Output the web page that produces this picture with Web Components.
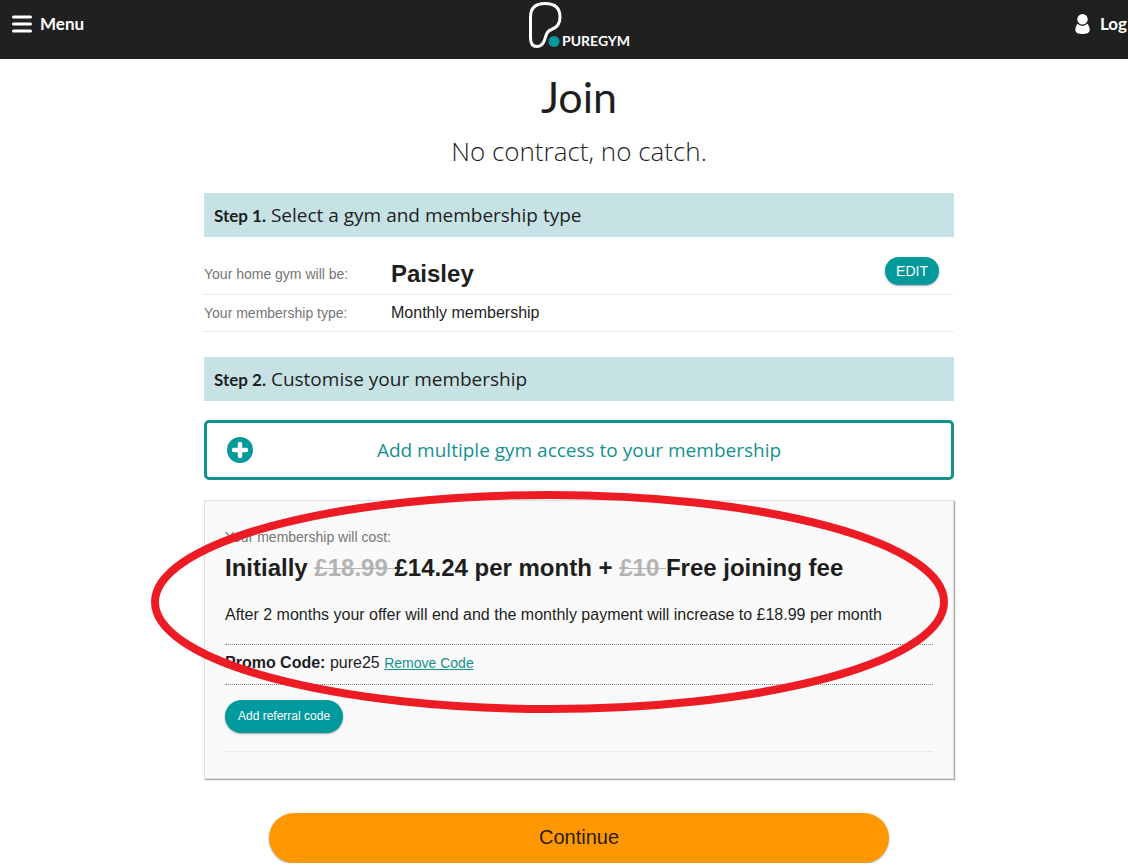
<!DOCTYPE html>
<html lang="en">
<head>
<meta charset="utf-8">
<title>Join PureGym</title>
<style>
  html { overflow: hidden auto; }
  body {
    margin: 0;
    overflow-x: hidden;
    background: #fff;
    color: #1e1e1e;
    font: 16px/24px "Liberation Sans", Arial, sans-serif;
    --brand: "Open Sans", sans-serif;
    --brand-bold: "Lato", "Open Sans", sans-serif;
    --teal: #00999c;
    --grey: #757575;
  }
</style>
</head>
<body>
<join-page></join-page>

<script>
const define = (name, html) => {
  const template = document.createElement('template');
  template.innerHTML = html;
  customElements.define(name, class extends HTMLElement {
    constructor() {
      super();
      this.attachShadow({ mode: 'open' }).append(template.content.cloneNode(true));
    }
  });
};

define('site-header', `
<style>
  :host { display: block; background: #202020; color: #fff; }
  header { display: grid; grid-template-columns: 1fr auto 1fr; height: 59px; padding: 0 12px; }
  button, .account {
    display: flex; align-items: center; gap: 8px; height: 48px;
    padding: 0; border: 0; background: none; color: inherit; text-decoration: none;
    font: 700 17px/24px var(--brand-bold);
  }
  .account { justify-self: end; gap: 10px; margin-right: 19px; }
  button { justify-self: start; }
  .logo { display: block; height: 48px; }
  svg { display: block; }
  text { font: 700 14px var(--brand-bold); }
</style>
<header>
  <button type="button">
    <svg width="20" height="18" viewBox="0 0 20 18" stroke="#fff" stroke-width="3" stroke-linecap="round" aria-hidden="true"><path d="M1.500 2h17M1.500 9h17M1.500 16h17"/></svg>
    Menu
  </button>
  <a class="logo" href="#" aria-label="PureGym">
    <svg width="102" height="50" viewBox="0 0 102 50">
      <path d="M2.500 17C2.500 8 7 3.500 17 3.500C27 3.500 32 8 32 17C32 24 29.500 27.500 23.500 29.500C18.500 31.500 18.500 34 16.500 40C15 44.500 12.500 46.500 9 46.500C4.500 46.500 2.500 43.500 2.500 38Z" fill="none" stroke="#fff" stroke-width="3" stroke-linejoin="round"/>
      <circle cx="26" cy="41.500" r="5.500" fill="#00999c"/>
      <text x="34" y="46" fill="#fff">PUREGYM</text>
    </svg>
  </a>
  <a class="account" href="#">
    <svg width="15" height="20" viewBox="0 0 15 20" fill="#fff" aria-hidden="true"><circle cx="7.500" cy="5.300" r="5.200"/><path d="M2.300 9.800Q7.500 14 12.700 9.800Q14.800 13 14.700 16.500Q14 20 7.500 20Q1 20 .3 16.500Q.2 13 2.300 9.800Z"/></svg>
    Log
  </a>
</header>`);

define('step-title', `
<style>
  :host { display: block; }
  h2 { margin: 0; padding: 10px; background: #c6e2e4; font: 400 19px/24px var(--brand); }
  ::slotted(b) { font: 700 17px/16px var(--brand-bold); }
</style>
<h2><slot name="step"></slot> <slot></slot></h2>`);

define('detail-row', `
<style>
  :host { display: flex; align-items: center; padding: var(--row-pad, 6px 0); border-bottom: 1px dotted #d8d8d8; }
  .label { flex: 0 0 187px; color: var(--grey); font-size: 14px; }
  .value { flex: 1; }
  ::slotted([slot="action"]) { align-self: flex-start; }
</style>
<span class="label"><slot name="label"></slot></span>
<span class="value"><slot></slot></span>
<slot name="action"></slot>`);

define('pill-button', `
<style>
  :host { display: inline-block; }
  button {
    display: block; width: 100%; border: 0; border-radius: 25px;
    padding: var(--pill-pad, 4px 11px); background: var(--pill-bg, var(--teal)); color: var(--pill-ink, #fff);
    box-shadow: 0 1px 2px rgba(0, 0, 0, .35);
    font: var(--pill-font, 14px/20px "Liberation Sans", Arial, sans-serif);
  }
</style>
<button type="button"><slot></slot></button>`);

define('add-option', `
<style>
  :host { display: block; }
  button {
    display: grid; grid-template-columns: 26px 1fr 26px; align-items: center;
    width: 100%; height: 60px; padding: 0 20px; background: #fff;
    border: 3px solid #14918f; border-radius: 5px; color: #14918f;
    font: 400 19px/24px var(--brand);
  }
  svg { display: block; }
</style>
<button type="button">
  <svg width="26" height="26" viewBox="0 0 26 26" aria-hidden="true"><circle cx="13" cy="13" r="13" fill="#00999c"/><path d="M13 7v12M7 13h12" stroke="#fff" stroke-width="4.500" stroke-linecap="round"/></svg>
  <span><slot></slot></span>
</button>`);

define('highlight-ring', `
<style>
  :host { position: absolute; inset: -10px 5px 65px -54px; pointer-events: none; }
  svg { display: block; width: 100%; height: 100%; overflow: visible; }
</style>
<svg viewBox="0 0 798 222" preserveAspectRatio="none" aria-hidden="true"><ellipse cx="399" cy="111" rx="395" ry="107" fill="none" stroke="#ed1c24" stroke-width="8"/></svg>`);

define('cost-card', `
<style>
  :host { display: block; position: relative; padding: 26px 20px; background: #fafafa; border: 1px solid #e0e0e0; box-shadow: 1px 1px 1px #aaa; }
  p { margin: 0; }
  .label { color: var(--grey); font-size: 14px; line-height: 20px; }
  h3 { margin: 6px 0 20px; font-size: 24px; line-height: 30px; }
  s { color: #b3b3b3; text-decoration-thickness: 1px; }
  .promo { margin: 17px 0 15px; padding: 6px 0 9px; border: 1px dotted #888; border-width: 1px 0; }
  .promo a { color: #14918f; font-size: 14px; }
  .referral { padding-bottom: 18px; border-bottom: 1px dotted #ddd; }
  pill-button { display: table; --pill-pad: 6px 13px 7px; --pill-font: 12px/20px "Liberation Sans", Arial, sans-serif; }
</style>
<p class="label">Your membership will cost:</p>
<h3>Initially <s>£18.99 </s>£14.24 per month + <s>£10 </s>Free joining fee</h3>
<p>After 2 months your offer will end and the monthly payment will increase to £18.99 per month</p>
<p class="promo"><b>Promo Code:</b> pure25 <a href="#">Remove Code</a></p>
<div class="referral"><pill-button>Add referral code</pill-button></div>
<highlight-ring></highlight-ring>`);

define('join-page', `
<style>
  /* The page runs slightly wider than the window. */
  :host { display: block; width: calc(100% + 30px); }
  main { max-width: 750px; margin: 0 auto; }
  h1 { margin: 0; padding-top: 14px; font: 400 43px/48px var(--brand-bold); text-align: center; }
  .tagline { margin: 14px 0 26px; font: 300 26px/32px var(--brand); text-align: center; }
  .gym { --row-pad: 20px 15px 4px 0; }
  .gym b { font-size: 24px; line-height: 33px; }
  step-title + add-option { margin: 19px 0 20px; }
  .details { margin-bottom: 25px; }
  .continue {
    display: block; width: 620px; max-width: 100%; margin: 34px auto 0;
    --pill-bg: #ff9800; --pill-ink: #2a1d0a; --pill-pad: 12px 20px 14px;
    --pill-font: 20px/24px "Liberation Sans", Arial, sans-serif;
  }
</style>
<site-header></site-header>
<main>
  <h1>Join</h1>
  <p class="tagline">No contract, no catch.</p>
  <step-title><b slot="step">Step 1.</b>Select a gym and membership type</step-title>
  <div class="details">
    <detail-row class="gym"><span slot="label">Your home gym will be:</span><b>Paisley</b><pill-button slot="action">EDIT</pill-button></detail-row>
    <detail-row><span slot="label">Your membership type:</span>Monthly membership</detail-row>
  </div>
  <step-title><b slot="step">Step 2.</b>Customise your membership</step-title>
  <add-option>Add multiple gym access to your membership</add-option>
  <cost-card></cost-card>
  <pill-button class="continue">Continue</pill-button>
</main>`);
</script>
</body>
</html>
